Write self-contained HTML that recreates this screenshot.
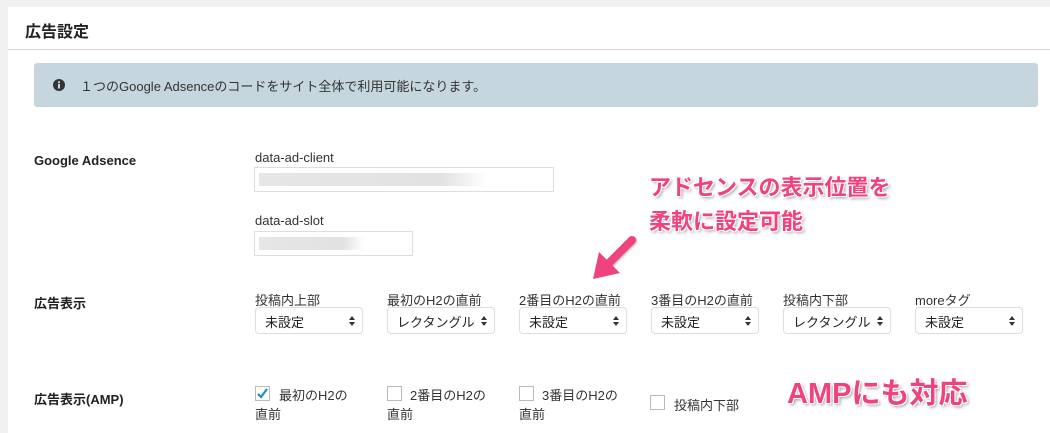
<!DOCTYPE html>
<html><head><meta charset="utf-8"><style>
*{margin:0;padding:0;box-sizing:border-box}
body{width:1050px;height:433px;background:#f1f1f1;position:relative;overflow:hidden;font-family:"Liberation Sans","Noto Sans CJK JP",sans-serif;color:#333;font-size:13px}
.card{position:absolute;left:8px;top:7px;right:0;bottom:0;background:#fff}
.a{position:absolute;white-space:nowrap}
.hdr{left:25px;top:18px;font-size:16px;font-weight:bold;color:#222}
.line{position:absolute;left:8px;right:0;top:49px;height:1px;background:#d8d8d8}
.info{position:absolute;left:34px;top:63px;width:1004px;height:44px;background:#c6d6df;border-radius:3px}
.lab{font-weight:bold;font-size:13px;color:#222}
.inp{position:absolute;border:1px solid #ddd;background:#fff}
.blur{position:absolute;left:4px;top:5px;height:13px;background:linear-gradient(90deg,#e6e6e6,#e2e2e2 80%,#fff)}
.sel{position:absolute;top:307px;width:108px;height:27px;border:1px solid #ddd;border-radius:4px;background:#fff;font-size:13px;padding:4px 0 0 9px;color:#222}
.sel::after{content:"";position:absolute;right:7px;top:8px;border:3px solid transparent;border-bottom:4px solid #333;border-top:none}
.sel::before{content:"";position:absolute;right:7px;top:14px;border:3px solid transparent;border-top:4px solid #333;border-bottom:none}
.cb{position:absolute;width:15px;height:15px;border:1px solid #bbb;background:#fff}
.pink{color:#f0427c;font-weight:bold;text-shadow:1px 1px 0 #fff,-1px -1px 0 #fff,1px -1px 0 #fff,-1px 1px 0 #fff,2px 2px 3px rgba(0,0,0,.4)}
</style></head><body>
<div class="card"></div>
<div class="a hdr">広告設定</div>
<div class="line"></div>
<div class="info"></div>
<svg class="a" style="left:53px;top:79px" width="12" height="12" viewBox="0 0 12 12"><circle cx="6" cy="6" r="6" fill="#333"/><rect x="5" y="5" width="2" height="4.5" fill="#c6d6df"/><circle cx="6" cy="3.2" r="1.1" fill="#c6d6df"/></svg>
<div class="a" style="left:80px;top:76px;font-size:13px;color:#333">１つのGoogle Adsenceのコードをサイト全体で利用可能になります。</div>

<div class="a lab" style="left:34px;top:153px">Google Adsence</div>
<div class="a" style="left:255px;top:150px">data-ad-client</div>
<div class="inp" style="left:254px;top:167px;width:300px;height:25px"><div class="blur" style="width:228px"></div></div>
<div class="a" style="left:255px;top:213px">data-ad-slot</div>
<div class="inp" style="left:254px;top:231px;width:159px;height:25px"><div class="blur" style="width:105px"></div></div>

<div class="a pink" style="left:649px;top:170px;font-size:22px">アドセンスの表示位置を</div>
<div class="a pink" style="left:649px;top:204px;font-size:22px">柔軟に設定可能</div>
<svg class="a" style="left:588px;top:234px" width="50" height="50" viewBox="0 0 50 50"><path d="M44 6 L18 32" stroke="#f0427c" stroke-width="8" stroke-linecap="round" filter="drop-shadow(1px 1px 1px rgba(0,0,0,.3))"/><path d="M5 45 L11 18 L32 39 Z" fill="#f0427c"/></svg>

<div class="a lab" style="left:34px;top:293px">広告表示</div>
<div class="a" style="left:255px;top:290px">投稿内上部</div>
<div class="a" style="left:387px;top:290px">最初のH2の直前</div>
<div class="a" style="left:519px;top:290px">2番目のH2の直前</div>
<div class="a" style="left:651px;top:290px">3番目のH2の直前</div>
<div class="a" style="left:783px;top:290px">投稿内下部</div>
<div class="a" style="left:915px;top:290px">moreタグ</div>
<div class="sel" style="left:255px">未設定</div>
<div class="sel" style="left:387px">レクタングル</div>
<div class="sel" style="left:519px">未設定</div>
<div class="sel" style="left:651px">未設定</div>
<div class="sel" style="left:783px">レクタングル</div>
<div class="sel" style="left:915px">未設定</div>

<div class="a lab" style="left:34px;top:389px">広告表示(AMP)</div>
<div class="cb" style="left:255px;top:386px"><svg width="13" height="13" viewBox="0 0 13 13" style="position:absolute;left:0;top:0"><path d="M2 7 L5 10 L11 2" stroke="#1e8cbe" stroke-width="2.2" fill="none"/></svg></div>
<div class="a" style="left:279px;top:385px">最初のH2の</div>
<div class="a" style="left:255px;top:404px">直前</div>
<div class="cb" style="left:387px;top:386px"></div>
<div class="a" style="left:410px;top:385px">2番目のH2の</div>
<div class="a" style="left:387px;top:404px">直前</div>
<div class="cb" style="left:519px;top:386px"></div>
<div class="a" style="left:542px;top:385px">3番目のH2の</div>
<div class="a" style="left:519px;top:404px">直前</div>
<div class="cb" style="left:650px;top:395px"></div>
<div class="a" style="left:674px;top:395px">投稿内下部</div>
<div class="a pink" style="left:787px;top:370px;font-size:29px">AMPにも対応</div>
</body></html>
